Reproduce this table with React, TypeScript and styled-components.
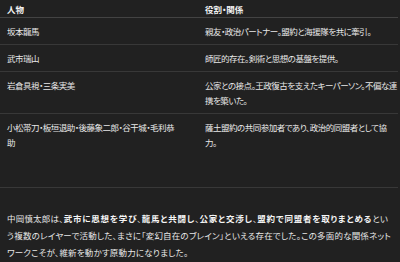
import React from 'react';
import styled, { createGlobalStyle } from 'styled-components';

const GlobalStyle = createGlobalStyle`
  html, body {
    margin: 0;
    padding: 0;
    background: #212121;
  }
  body {
    font-family: "Noto Sans CJK JP", "Noto Sans", sans-serif;
    font-feature-settings: "palt";
    color: #e8e8e8;
    overflow: hidden;
  }
`;

const rows = [
  { person: '坂本龍馬', role: '親友・政治パートナー。盟約と海援隊を共に牽引。' },
  { person: '武市瑞山', role: '師匠的存在。剣術と思想の基盤を提供。' },
  { person: '岩倉具視・三条実美', role: '公家との接点。王政復古を支えたキーパーソン。不偏な連携を築いた。' },
  { person: '小松帯刀・板垣退助・後藤象二郎・谷干城・毛利恭助', role: '薩土盟約の共同参加者であり、政治的同盟者として協力。' },
];

export default function App() {
  return (
    <>
      <GlobalStyle />
      <Page>
        <Table>
          <HeadRow>
            <HeadCell>人物</HeadCell>
            <HeadCell>役割・関係</HeadCell>
          </HeadRow>
          {rows.map((r, i) => (
            <Row key={r.person} $last={i === rows.length - 1}>
              <Cell>{r.person}</Cell>
              <Cell>{r.role}</Cell>
            </Row>
          ))}
        </Table>
        <Paragraph>
          中岡慎太郎は、<strong>武市に思想を学び</strong>、<strong>龍馬と共闘し</strong>、<strong>公家と交渉し</strong>、<strong>盟約で同盟者を取りまとめる</strong>という複数のレイヤーで活動した、まさに「変幻自在のブレイン」といえる存在でした。この多面的な関係ネットワークこそが、維新を動かす原動力になりました。
        </Paragraph>
      </Page>
    </>
  );
}

const Page = styled.div`
  width: 400px;
  height: 262px;
`;

const Table = styled.div`
  display: flex;
  flex-direction: column;
  width: 397.5px;
`;

const HeadRow = styled.div`
  display: grid;
  grid-template-columns: 198px 199.5px;
  border-bottom: 1px solid #434343;
`;

const HeadCell = styled.div`
  padding: 2px 0 0 7px;
  font-size: 8.5px;
  line-height: 15px;
  font-weight: 700;
  color: #f2f2f2;
`;

const Row = styled.div<{ $last: boolean }>`
  display: grid;
  grid-template-columns: 198px 199.5px;
  padding-bottom: ${p => (p.$last ? '37px' : '5px')};
  border-bottom: 1px solid #383838;
`;

const Cell = styled.div`
  padding: 6px 0 0 7px;
  font-size: 8.5px;
  line-height: 15px;
  letter-spacing: -0.5px;
  color: #e8e8e8;
  &:first-child {
    padding-right: 20px;
  }
`;

const Paragraph = styled.p`
  margin: 22px 0 0;
  padding: 0 7px;
  width: 386px;
  font-size: 8.5px;
  line-height: 17px;
  letter-spacing: 0.2px;
  color: #e8e8e8;
  strong {
    font-weight: 700;
    letter-spacing: 0.8px;
    color: #f5f5f5;
  }
`;
